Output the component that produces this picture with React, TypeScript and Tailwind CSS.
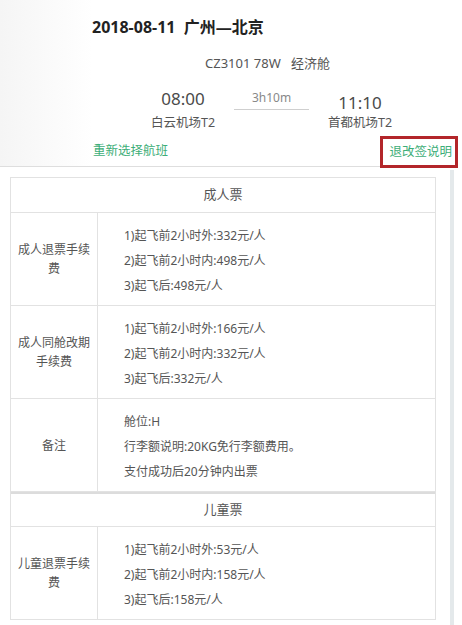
import React from "react";

type Row = { label: string[]; lines: string[] };

const adult: Row[] = [
  {
    label: ["成人退票手续", "费"],
    lines: ["1)起飞前2小时外:332元/人", "2)起飞前2小时内:498元/人", "3)起飞后:498元/人"],
  },
  {
    label: ["成人同舱改期", "手续费"],
    lines: ["1)起飞前2小时外:166元/人", "2)起飞前2小时内:332元/人", "3)起飞后:332元/人"],
  },
  {
    label: ["备注"],
    lines: ["舱位:H", "行李额说明:20KG免行李额费用。", "支付成功后20分钟内出票"],
  },
];

const child: Row[] = [
  {
    label: ["儿童退票手续", "费"],
    lines: ["1)起飞前2小时外:53元/人", "2)起飞前2小时内:158元/人", "3)起飞后:158元/人"],
  },
];

function SectionTitle({ title, thick }: { title: string; thick?: boolean }) {
  return (
    <div
      className={`flex h-[35px] items-center justify-center border-b border-[#e2e2e2] text-[13px] text-[#555] ${
        thick ? "border-t-2 border-t-[#dcdcdc]" : ""
      }`}
    >
      {title}
    </div>
  );
}

function FeeRow({ row }: { row: Row }) {
  return (
    <div className="flex border-b border-[#e2e2e2]">
      <div className="flex w-[87px] shrink-0 flex-col items-center justify-center border-r border-[#e2e2e2] text-[12px] leading-[19px] text-[#555]">
        {row.label.map((l) => (
          <span key={l}>{l}</span>
        ))}
      </div>
      <div className="flex-1 pl-[26px] pt-[10px] pb-[7px] text-[12px] leading-[25px] text-[#555]">
        {row.lines.map((l) => (
          <div key={l}>{l}</div>
        ))}
      </div>
    </div>
  );
}

export default function App() {
  return (
    <div
      className="relative h-[625px] w-[462px] overflow-hidden bg-white"
      style={{ fontFamily: '"Noto Sans", "Noto Sans CJK SC", sans-serif' }}
    >
      {/* flight summary */}
      <div className="bg-gradient-to-r from-[#f5f5f5] via-white via-20% to-white pt-[15px]">
        <div className="pl-[92px] text-[16px] font-bold leading-[24px] text-[#222]">
          2018-08-11&nbsp;&nbsp;广州—北京
        </div>
        <div className="mt-[15px] pl-[205px] text-[13px] leading-[18px] text-[#555]">
          CZ3101 78W&nbsp;&nbsp;&nbsp;经济舱
        </div>

        <div className="mt-[16px] flex pl-[148px] text-[#555]">
          <div className="flex w-[70px] flex-col items-center">
            <span className="text-[17px] leading-[22px] text-[#4a4a4a]">08:00</span>
            <span className="mt-[4px] text-[12.5px] leading-[18px]">白云机场T2</span>
          </div>
          <div className="ml-[16px] h-[22px] w-[75px] border-b border-[#cfcfcf] pt-[2px] text-center text-[12px] leading-[16px] text-[#888]">
            3h10m
          </div>
          <div className="ml-[16px] mt-[4px] flex w-[70px] flex-col items-center">
            <span className="text-[17px] leading-[22px] text-[#4a4a4a]">11:10</span>
            <span className="text-[12.5px] leading-[18px]">首都机场T2</span>
          </div>
        </div>

        <div className="mt-[4px] flex h-[31px] w-[458px] items-center border-b border-[#dedede] text-[12.5px] text-[#3dae78]">
          <span className="pl-[93px]">重新选择航班</span>
          <div className="ml-auto flex h-[32px] w-[78px] items-center justify-end self-start border-[3px] border-[#b3262a] pr-[3px]">
            退改签说明
          </div>
        </div>
      </div>

      {/* fee table */}
      <div className="ml-[10px] mt-[10px] w-[426px] border-x border-t border-[#e2e2e2]">
        <SectionTitle title="成人票" />
        {adult.map((r) => (
          <FeeRow key={r.label.join("")} row={r} />
        ))}
        <SectionTitle title="儿童票" thick />
        {child.map((r) => (
          <FeeRow key={r.label.join("")} row={r} />
        ))}
      </div>

      {/* scrollbar track */}
      <div className="absolute bottom-0 left-[450px] top-[170px] w-[4px] bg-[#e4e9eb]" />
    </div>
  );
}
